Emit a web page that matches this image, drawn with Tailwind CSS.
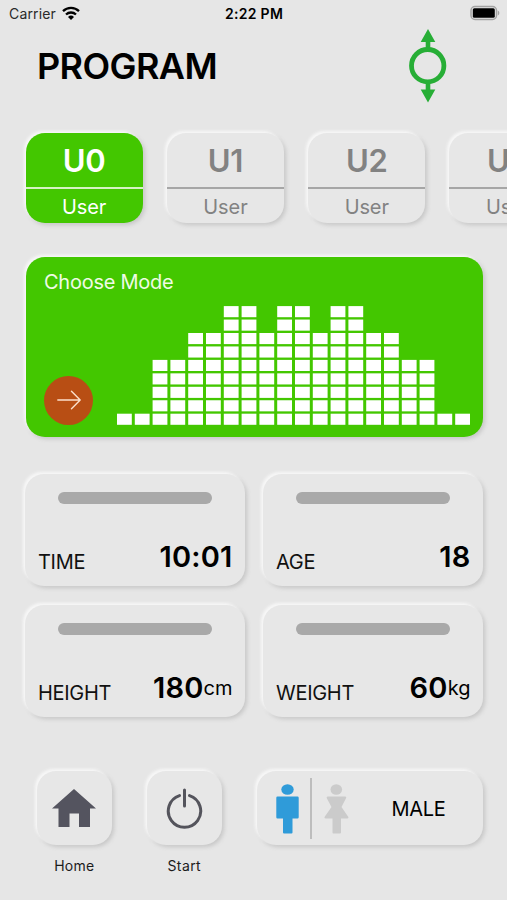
<!DOCTYPE html>
<html lang="en">
<head>
  <meta charset="UTF-8" />
  <meta name="viewport" content="width=device-width, initial-scale=1.0" />
  <title>Program</title>
  <script src="https://cdn.jsdelivr.net/npm/@tailwindcss/browser@4"></script>
</head>
<body class="bg-[#e6e6e6] font-['Inter',sans-serif] text-black">
<div class="w-[507px] h-[900px] overflow-hidden flex flex-col">
  <!-- Status bar -->
  <div class="h-[27px] shrink-0 grid grid-cols-3 items-center pl-[9px] pr-[7px]">
    <div class="flex items-center gap-[6px] text-[14px] text-[#2a2a2a]">
      <span class="tracking-[0.15px]">Carrier</span>
      <svg class="w-[18px] h-[14px] -mt-px" viewBox="0 0 18 14" fill="none" stroke="#000" stroke-width="2.3">
        <path d="M1 5.2a11.5 11.5 0 0 1 16 0"/>
        <path d="M4 8.5a7.3 7.3 0 0 1 10 0"/>
        <path d="M9 14L6 10.9a4.4 4.4 0 0 1 6 0z" fill="#000" stroke="none"/>
      </svg>
    </div>
    <div class="text-center text-[14px] font-semibold tracking-[0.3px] -ml-px">2:22 PM</div>
    <svg class="justify-self-end w-[31px] h-[16px] -mt-px" viewBox="0 0 31 16">
      <rect x="2" y="1.5" width="25.5" height="13" rx="4" fill="#e6e6e6" stroke="#a3a3a3" stroke-width="1.5"/>
      <rect x="3.8" y="3.3" width="22" height="9.4" rx="1.5" fill="#000"/>
      <path d="M28.8 5.500c2 .8 2 4.200 0 5z" fill="#a3a3a3"/>
    </svg>
  </div>

  <!-- Title -->
  <header class="h-[106px] shrink-0 flex justify-between pl-[37px] pr-[60px]">
    <h1 class="mt-[17px] text-[36px] leading-[44px] font-semibold tracking-[-0.6px]">PROGRAM</h1>
    <svg class="mt-[2px] w-[38px] h-[74px]" viewBox="0 0 38 74">
      <g fill="#27ae36">
        <path d="M19 0l7.300 13h-5v8h-4.600v-8h-5z"/>
        <path d="M19 73.500l7.300-13h-5v-8h-4.600v8h-5z"/>
      </g>
      <circle cx="18.700" cy="36.700" r="16.200" fill="none" stroke="#27ae36" stroke-width="4.800"/>
    </svg>
  </header>

  <!-- Users -->
  <section class="shrink-0 flex gap-[24px] pl-[25.500px]" id="users"></section>

  <!-- Mode -->
  <section class="mt-[34px] ml-[25.500px] w-[457px] h-[179.500px] shrink-0 rounded-[19px] bg-[#43c700] shadow-[-2px_-2px_3px_#f8f8f8,2px_2px_4px_#c6c6c6] flex justify-between pl-[18.500px] pr-[12.500px] pb-[12px]">
    <div class="flex flex-col justify-between">
      <h2 class="mt-[11px] w-0 whitespace-nowrap text-[20px] leading-[28px] tracking-[-0.250px] text-[#effbe6]">Choose Mode</h2>
      <button class="w-[49px] h-[49px] rounded-full bg-[#b84e14] flex items-center justify-center">
        <svg class="w-[24px] h-[20px]" viewBox="0 0 24 20" fill="none" stroke="#fbe0cc" stroke-width="1.400" stroke-linecap="round" stroke-linejoin="round"><path d="M.8 10h22.400M14.500 1.200L23.200 10l-8.700 8.800"/></svg>
      </button>
    </div>
    <svg class="self-end w-[353px] h-[119px]" viewBox="0 0 353 119" fill="#fff" id="levels"></svg>
  </section>

  <!-- Body data -->
  <section class="mt-[37px] shrink-0 grid grid-cols-2 gap-x-[18.500px] gap-y-[18.500px] pl-[25px] pr-[24.500px]" id="stats"></section>

  <!-- Bottom bar -->
  <footer class="mt-[54px] shrink-0 flex items-start pl-[37px]">
    <div class="w-[74.500px] flex flex-col items-center">
      <button class="w-[74.500px] h-[74px] rounded-[19px] bg-[#e7e7e7] shadow-[-2px_-2px_3px_#f8f8f8,2px_2px_4px_#c6c6c6] flex items-center justify-center">
        <svg class="w-[44px] h-[38px]" viewBox="0 0 44 38" fill="#54545f"><path d="M22 0l22 19.500h-6V38H27V24.500h-9.500V38H6.500V19.500H0z"/></svg>
      </button>
      <span class="mt-[10px] text-[14px] leading-[22px] tracking-[0.250px] text-[#1c1c1c]">Home</span>
    </div>
    <div class="ml-[35.500px] w-[74.500px] flex flex-col items-center">
      <button class="w-[74.500px] h-[74px] rounded-[19px] bg-[#e7e7e7] shadow-[-2px_-2px_3px_#f8f8f8,2px_2px_4px_#c6c6c6] flex items-center justify-center">
        <svg class="w-[37px] h-[41px]" viewBox="0 0 37 41" fill="none" stroke="#54545c" stroke-width="3" stroke-linecap="round"><path d="M13.500 7.600a16.200 16.200 0 1 0 10 0M18.500 2v16"/></svg>
      </button>
      <span class="mt-[10px] text-[14px] leading-[22px] tracking-[0.400px] text-[#1c1c1c]">Start</span>
    </div>
    <div class="ml-[35.500px] w-[225.500px] h-[74px] rounded-[19px] bg-[#e7e7e7] shadow-[-2px_-2px_3px_#f8f8f8,2px_2px_4px_#c6c6c6] flex items-center pl-[18.500px]">
      <svg class="mt-px w-[23px] h-[50px]" viewBox="0 0 23 50" fill="#2f9bd9">
        <ellipse cx="11.500" cy="5.500" rx="6.200" ry="5.300"/>
        <path d="M1.500 12.500h20a1.200 1.200 0 0 1 1.200 1.200v19.500a1.200 1.200 0 0 1-1.200 1.200h-5V48.500a1 1 0 0 1-1 1h-7.500a1 1 0 0 1-1-1V34.400h-5.500a1.200 1.200 0 0 1-1.200-1.200V13.700a1.200 1.200 0 0 1 1.200-1.200z"/>
      </svg>
      <div class="ml-[11px] w-[2px] h-[61px] bg-[#bdbdbd]"></div>
      <svg class="mt-px ml-[12px] w-[25px] h-[50px]" viewBox="0 0 25 50" fill="#cbcbcb">
        <ellipse cx="12.300" cy="5.500" rx="5.800" ry="5.300"/>
        <path d="M4 12.500h17q1.800 0 1 1.800L17.500 23l6.700 9.800q.8 1.600-1 1.600H17V48.500a1 1 0 0 1-1 1H9.500a1 1 0 0 1-1-1V34.400H1.700q-1.800 0-1-1.600L7.500 23 2.800 14.300q-.6-1.800 1.200-1.800z"/>
      </svg>
      <span class="mt-[2px] ml-[43px] text-[20px] tracking-[-0.300px]">MALE</span>
    </div>
  </footer>
</div>

<script>
const USERS=['U0','U1','U2','U3'];
const LEVELS=[1,1,5,5,7,7,9,9,7,9,9,7,9,9,7,7,5,5,1,1];
const STATS=[
  {label:'TIME',value:'10:01',unit:''},
  {label:'AGE',value:'18',unit:''},
  {label:'HEIGHT',value:'180',unit:'cm'},
  {label:'WEIGHT',value:'60',unit:'kg'}
];
const $=id=>document.getElementById(id);

$('users').innerHTML=USERS.map((u,i)=>{
  const tone=i===0?'bg-[#43c700] text-white':'bg-[#e7e7e7] text-[#828282]';
  const line=i===0?'bg-[#d5f3c4]':'bg-[#a6a6a6]';
  return `<div class="w-[117.300px] h-[90px] shrink-0 rounded-[19px] shadow-[-2px_-2px_3px_#f8f8f8,2px_2px_4px_#c6c6c6] flex flex-col text-center ${tone}">
    <div class="h-[54px] text-[31px] leading-[56px] font-semibold tracking-[-0.300px]">${u}</div>
    <div class="h-[2px] ${line}"></div>
    <div class="h-[34px] text-[20px] leading-[36px] tracking-[-0.100px]">User</div>
  </div>`;
}).join('');

// one column of blocks per level, stacked from the bottom
$('levels').innerHTML=LEVELS.map((n,col)=>Array.from({length:n},(_,row)=>
  `<rect x="${(col*17.8).toFixed(2)}" y="${(107.7-row*13.45).toFixed(2)}" width="14.8" height="11.1"/>`
).join('')).join('');

$('stats').innerHTML=STATS.map(s=>`<div class="h-[112.500px] rounded-[19px] bg-[#e7e7e7] shadow-[-2px_-2px_3px_#f8f8f8,2px_2px_4px_#c6c6c6] flex flex-col justify-between pt-[18px] pb-[9px] pl-[13px] pr-[13px]">
    <div class="ml-[20px] w-[154px] h-[12.500px] rounded-full bg-[#a9a9a9]"></div>
    <div class="flex justify-between items-end">
      <span class="text-[20px] leading-[30px] tracking-[-0.300px] text-[#111]">${s.label}</span>
      <span class="flex items-center -mr-px mb-[2px]"><b class="text-[29px] leading-[36px] font-semibold tracking-[0.200px]">${s.value}</b><span class="text-[20px]">${s.unit}</span></span>
    </div>
  </div>`).join('');
</script>
</body>
</html>
